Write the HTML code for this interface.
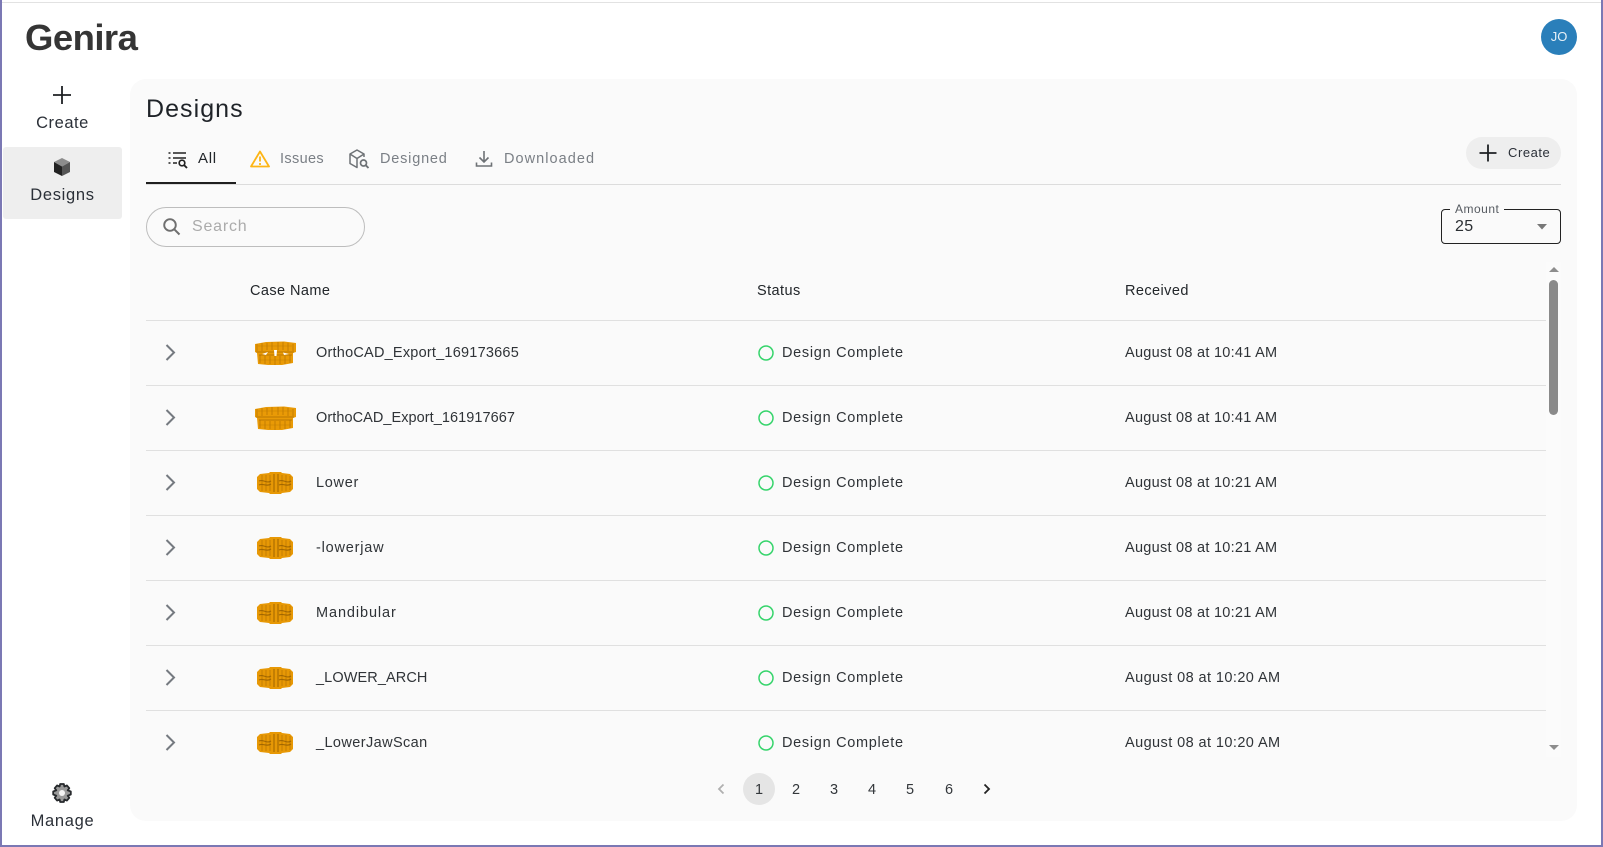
<!DOCTYPE html>
<html><head><meta charset="utf-8">
<style>
html,body{margin:0;padding:0;background:#fff}
body{width:1603px;height:847px;position:relative;overflow:hidden;font-family:"Liberation Sans",sans-serif;color:#2f3337}
.a{position:absolute;white-space:nowrap}
.t{font-size:14.5px;line-height:18px;letter-spacing:.7px}
.d{letter-spacing:.27px}
.d2{letter-spacing:.42px}
.h{font-size:14.5px;color:#22262a;letter-spacing:.42px}
.line{position:absolute;left:146px;width:1400px;height:1px;background:#e0e0e0}
.nav{position:absolute;left:3px;width:119px;text-align:center;font-size:16.5px;letter-spacing:.7px;color:#2b3038}
.tab{font-size:14.5px;letter-spacing:.7px;color:#7a7f85;line-height:18px}
.pg{position:absolute;top:781px;width:32px;text-align:center;font-size:14.5px;line-height:18px;color:#33373b}
svg{position:absolute;display:block}
</style></head>
<body>
<svg width="0" height="0" style="position:absolute">
<defs>
<g id="wide">
<path d="M1 3 L12 1 L30 0.500 L42 2 L42 11 L39 12 L39 22 L28 24 L14 24 L4 23 L3 12 L1 11 Z" fill="#e99a06"/>
<path d="M3 3 V10 M8 2 V10 M13 2 V9 M18 1 V9 M24 1 V9 M29 1 V9 M34 2 V10 M39 3 V10 M6 14 V22 M11 15 V23 M16 15 V23 M21 15 V24 M26 15 V23 M31 15 V23 M36 14 V22" stroke="#a86a00" stroke-width="1" opacity=".55"/>
<path d="M2 11 H40 M5 14 H38" stroke="#a96a00" stroke-width="1.200" opacity=".55"/>
<path d="M4 5 H38 M5 19 H37" stroke="#b87400" stroke-width=".8" opacity=".45"/>
</g>
<g id="wide1">
<use href="#wide"/>
<path d="M8 13 L14 11 L12 14 Z M29 11.500 L35 13 L30 14 Z M20 9 L23 9 L22.500 15 L20.500 15 Z" fill="#fff"/>
</g>
<g id="narrow">
<path d="M3 2 L12 1 L13 0 L24 0 L25 1 L33 2 L36 5 L36 17 L33 20 L25 21 L24 22 L13 22 L12 21 L3 20 L0 17 L0 5 Z" fill="#e79805"/>
<path d="M17 2 V20 M21 2 V20" stroke="#8f5a00" stroke-width="1.100" opacity=".75"/>
<path d="M5 3 V19 M9 3 V19 M13 3 V19 M25 3 V19 M29 3 V19 M33 4 V18" stroke="#a86a00" stroke-width="1" opacity=".55"/>
<path d="M2 9 C6 7 10 12 14 9 M22 9 C26 7 30 12 34 9 M2 13 C6 11 10 15 14 12 M22 13 C26 11 30 15 34 12" stroke="#8f5a00" stroke-width="1.100" fill="none" opacity=".75"/>
</g>
<path id="chev" d="M1.500 1 L9 8.500 L1.500 16" fill="none" stroke="#757a80" stroke-width="2"/>
<g id="okc"><circle cx="8" cy="8" r="7" fill="none" stroke="#35d46b" stroke-width="1.500"/></g>
</defs>
</svg>

<!-- window frame -->
<div class="a" style="left:0;top:0;width:2px;height:847px;background:#7b78b4"></div>
<div class="a" style="left:1601px;top:0;width:2px;height:847px;background:#7b78b4"></div>
<div class="a" style="left:0;top:845px;width:1603px;height:2px;background:#7b78b4"></div>
<div class="a" style="left:2px;top:2px;width:1599px;height:1px;background:#e2e2e2"></div>

<!-- header -->
<div class="a" style="left:25px;top:15px;font-size:36.500px;line-height:45px;font-weight:700;color:#353535;letter-spacing:-.55px">Genira</div>
<div class="a" style="left:1541px;top:19px;width:36px;height:36px;border-radius:50%;background:#2a7fba;color:#e6f0f7;font-size:13px;line-height:36px;text-align:center">JO</div>

<!-- sidebar -->
<svg style="left:52px;top:85px" width="20" height="20" viewBox="0 0 20 20"><path d="M10 1 V19 M1 10 H19" stroke="#1e2124" stroke-width="1.800"/></svg>
<div class="nav" style="top:114px;line-height:18px;letter-spacing:.55px">Create</div>
<div class="a" style="left:3px;top:147px;width:119px;height:72px;background:#eeeeee;border-radius:3px"></div>
<svg style="left:53px;top:157px" width="18" height="20" viewBox="0 0 18 20"><path d="M9 1 L17 5 L9 9.500 L1 5 Z" fill="#8d8d8d"/><path d="M1 5 L9 9.500 V19 L1 15 Z" fill="#222"/><path d="M17 5 L9 9.500 V19 L17 15 Z" fill="#555"/></svg>
<div class="nav" style="top:186px;line-height:18px;">Designs</div>
<svg style="left:52px;top:783px" width="20" height="20" viewBox="0 0 20 20"><path d="M8.200 1 H11.800 L12.400 3.500 L14.900 2.400 L17.300 5.200 L15.700 7.300 L18.800 8.500 V11.500 L15.700 12.700 L17.300 14.800 L14.900 17.600 L12.400 16.500 L11.800 19 H8.200 L7.600 16.500 L5.100 17.600 L2.700 14.800 L4.300 12.700 L1.200 11.500 V8.500 L4.300 7.300 L2.700 5.200 L5.100 2.400 L7.600 3.500 Z" fill="#9a9a9a" stroke="#26292c" stroke-width="1.800" stroke-linejoin="round"/><circle cx="10" cy="10" r="3" fill="#f4f4f4"/></svg>
<div class="nav" style="top:812px;line-height:18px">Manage</div>

<!-- panel -->
<div class="a" style="left:130px;top:79px;width:1447px;height:742px;background:#fafafa;border-radius:16px"></div>
<div class="a" style="left:146px;top:94px;font-size:25px;line-height:30px;letter-spacing:1.05px;color:#1f2328">Designs</div>

<!-- tabs -->
<svg style="left:168px;top:151px" width="20" height="18" viewBox="0 0 20 18"><path d="M0.500 2 H2.500 M5 2 H18 M0.500 7 H2.500 M5 7 H18 M0.500 12 H2.500 M5 12 H9" stroke="#222" stroke-width="1.500"/><circle cx="14" cy="12" r="2.800" fill="none" stroke="#222" stroke-width="1.700"/><path d="M16 14 L19 17" stroke="#222" stroke-width="1.900"/></svg>
<div class="a tab" style="left:198px;top:150px;color:#22262a;font-size:15px">All</div>
<svg style="left:250px;top:150px" width="20" height="18" viewBox="0 0 20 18"><path d="M10 1.500 L19 16.500 H1 Z" fill="none" stroke="#fdb515" stroke-width="1.800" stroke-linejoin="round"/><path d="M10 6.500 V11.500 M10 13 V15" stroke="#fdb515" stroke-width="1.800"/></svg>
<div class="a tab" style="left:280px;top:150px;letter-spacing:.35px">Issues</div>
<svg style="left:348px;top:148px" width="22" height="22" viewBox="0 0 22 22"><path d="M9 11 L9 19.500 L2 15.500 V6 L9 2 L16 6 V9 M2 6 L9 10.500 L16 6" fill="none" stroke="#6e7276" stroke-width="1.500" stroke-linejoin="round"/><circle cx="15.500" cy="15" r="3" fill="none" stroke="#6e7276" stroke-width="1.700"/><path d="M17.700 17.200 L20.500 20" stroke="#6e7276" stroke-width="1.900"/></svg>
<div class="a tab" style="left:380px;top:150px;letter-spacing:.8px">Designed</div>
<svg style="left:475px;top:150px" width="18" height="18" viewBox="0 0 18 18"><path d="M9 1 V12 M4.500 7.500 L9 12 L13.500 7.500 M1.500 12.500 V16 H16.500 V12.500" fill="none" stroke="#6e7276" stroke-width="1.600"/></svg>
<div class="a tab" style="left:504px;top:150px;letter-spacing:1.05px">Downloaded</div>
<div class="a" style="left:146px;top:184px;width:1415px;height:1px;background:#dcdcdc"></div>
<div class="a" style="left:146px;top:182px;width:90px;height:2px;background:#1f1f1f"></div>

<!-- create button -->
<div class="a" style="left:1466px;top:137px;width:95px;height:32px;border-radius:16px;background:#eeeeee"></div>
<svg style="left:1479px;top:144px" width="18" height="18" viewBox="0 0 18 18"><path d="M9 0.500 V17.500 M0.500 9 H17.500" stroke="#1e2124" stroke-width="1.800"/></svg>
<div class="a" style="left:1508px;top:145px;font-size:13px;line-height:16px;letter-spacing:.55px;color:#2b3038">Create</div>

<!-- search -->
<div class="a" style="left:146px;top:207px;width:217px;height:38px;border:1px solid #bdbdbd;border-radius:20px;box-sizing:content-box"></div>
<svg style="left:162px;top:217px" width="20" height="20" viewBox="0 0 20 20"><circle cx="8" cy="8" r="5.800" fill="none" stroke="#6f6f6f" stroke-width="1.900"/><path d="M12.300 12.300 L17.500 17.500" stroke="#6f6f6f" stroke-width="2"/></svg>
<div class="a" style="left:192px;top:217px;font-size:16px;line-height:20px;letter-spacing:.8px;color:#ababab">Search</div>

<!-- amount -->
<div class="a" style="left:1441px;top:209px;width:118px;height:33px;border:1px solid #222;border-radius:4px"></div>
<div class="a" style="left:1450px;top:202px;background:#fafafa;padding:0 5px;font-size:12px;line-height:14px;letter-spacing:.5px;color:#555a60">Amount</div>
<div class="a" style="left:1455px;top:217px;font-size:16px;line-height:19px;letter-spacing:.4px;color:#2b2f33">25</div>
<svg style="left:1537px;top:224px" width="10" height="6" viewBox="0 0 10 6"><path d="M0 0 H10 L5 5.500 Z" fill="#777"/></svg>

<!-- table head -->
<div class="a t h" style="left:250px;top:282px">Case Name</div>
<div class="a t h" style="left:757px;top:282px">Status</div>
<div class="a t h" style="left:1125px;top:282px">Received</div>
<div class="line" style="top:320px"></div>
<div class="line" style="top:385px"></div>
<div class="line" style="top:450px"></div>
<div class="line" style="top:515px"></div>
<div class="line" style="top:580px"></div>
<div class="line" style="top:645px"></div>
<div class="line" style="top:710px"></div>

<!-- row 1 -->
<svg style="left:165px;top:344px" width="12" height="18"><use href="#chev"/></svg>
<svg style="left:254px;top:341px" width="43" height="25"><use href="#wide1"/></svg>
<div class="a t" style="left:316px;top:344px;letter-spacing:.22px">OrthoCAD_Export_169173665</div>
<svg style="left:758px;top:345px" width="16" height="16"><use href="#okc"/></svg>
<div class="a t" style="left:782px;top:344px">Design Complete</div>
<div class="a t d" style="left:1125px;top:344px">August 08 at 10:41 AM</div>
<!-- row 2 -->
<svg style="left:165px;top:409px" width="12" height="18"><use href="#chev"/></svg>
<svg style="left:254px;top:406px" width="43" height="25"><use href="#wide"/></svg>
<div class="a t" style="left:316px;top:409px;letter-spacing:.06px">OrthoCAD_Export_161917667</div>
<svg style="left:758px;top:410px" width="16" height="16"><use href="#okc"/></svg>
<div class="a t" style="left:782px;top:409px">Design Complete</div>
<div class="a t d" style="left:1125px;top:409px">August 08 at 10:41 AM</div>
<!-- row 3 -->
<svg style="left:165px;top:474px" width="12" height="18"><use href="#chev"/></svg>
<svg style="left:257px;top:472px" width="36" height="22"><use href="#narrow"/></svg>
<div class="a t" style="left:316px;top:474px">Lower</div>
<svg style="left:758px;top:475px" width="16" height="16"><use href="#okc"/></svg>
<div class="a t" style="left:782px;top:474px">Design Complete</div>
<div class="a t d" style="left:1125px;top:474px">August 08 at 10:21 AM</div>
<!-- row 4 -->
<svg style="left:165px;top:539px" width="12" height="18"><use href="#chev"/></svg>
<svg style="left:257px;top:537px" width="36" height="22"><use href="#narrow"/></svg>
<div class="a t" style="left:316px;top:539px;letter-spacing:.8px">-lowerjaw</div>
<svg style="left:758px;top:540px" width="16" height="16"><use href="#okc"/></svg>
<div class="a t" style="left:782px;top:539px">Design Complete</div>
<div class="a t d" style="left:1125px;top:539px">August 08 at 10:21 AM</div>
<!-- row 5 -->
<svg style="left:165px;top:604px" width="12" height="18"><use href="#chev"/></svg>
<svg style="left:257px;top:602px" width="36" height="22"><use href="#narrow"/></svg>
<div class="a t" style="left:316px;top:604px;letter-spacing:.9px">Mandibular</div>
<svg style="left:758px;top:605px" width="16" height="16"><use href="#okc"/></svg>
<div class="a t" style="left:782px;top:604px">Design Complete</div>
<div class="a t d" style="left:1125px;top:604px">August 08 at 10:21 AM</div>
<!-- row 6 -->
<svg style="left:165px;top:669px" width="12" height="18"><use href="#chev"/></svg>
<svg style="left:257px;top:667px" width="36" height="22"><use href="#narrow"/></svg>
<div class="a t" style="left:316px;top:669px;letter-spacing:.1px">_LOWER_ARCH</div>
<svg style="left:758px;top:670px" width="16" height="16"><use href="#okc"/></svg>
<div class="a t" style="left:782px;top:669px">Design Complete</div>
<div class="a t d2" style="left:1125px;top:669px">August 08 at 10:20 AM</div>
<!-- row 7 -->
<svg style="left:165px;top:734px" width="12" height="18"><use href="#chev"/></svg>
<svg style="left:257px;top:732px" width="36" height="22"><use href="#narrow"/></svg>
<div class="a t" style="left:316px;top:734px;letter-spacing:.4px">_LowerJawScan</div>
<svg style="left:758px;top:735px" width="16" height="16"><use href="#okc"/></svg>
<div class="a t" style="left:782px;top:734px">Design Complete</div>
<div class="a t d2" style="left:1125px;top:734px">August 08 at 10:20 AM</div>

<!-- scrollbar -->
<div class="a" style="left:1546px;top:262px;width:15px;height:495px;background:#fbfbfb"></div>
<svg style="left:1549px;top:267px" width="10" height="6" viewBox="0 0 10 6"><path d="M5 0 L10 5 H0 Z" fill="#8d8d8d"/></svg>
<div class="a" style="left:1549px;top:280px;width:9px;height:135px;border-radius:5px;background:#8a8a8a"></div>
<svg style="left:1549px;top:745px" width="10" height="6" viewBox="0 0 10 6"><path d="M0 0 H10 L5 5 Z" fill="#8d8d8d"/></svg>

<!-- pagination -->
<svg style="left:717px;top:783px" width="8" height="12" viewBox="0 0 8 12"><path d="M6.500 1.500 L2 6 L6.500 10.500" fill="none" stroke="#b0b0b0" stroke-width="1.800"/></svg>
<div class="a" style="left:743px;top:773px;width:32px;height:32px;border-radius:50%;background:#e5e5e5"></div>
<div class="pg" style="left:743px">1</div>
<div class="pg" style="left:780px">2</div>
<div class="pg" style="left:818px">3</div>
<div class="pg" style="left:856px">4</div>
<div class="pg" style="left:894px">5</div>
<div class="pg" style="left:933px">6</div>
<svg style="left:983px;top:783px" width="8" height="12" viewBox="0 0 8 12"><path d="M1.500 1.500 L6 6 L1.500 10.500" fill="none" stroke="#222" stroke-width="1.800"/></svg>
</body></html>
